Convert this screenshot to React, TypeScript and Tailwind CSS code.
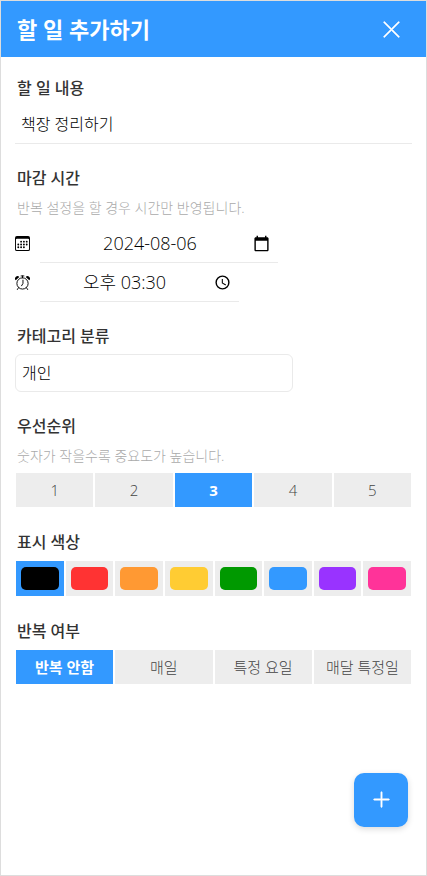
import { useState } from "react";
import { clsx } from "clsx";
import { BsCalendar3, BsPlusLg, BsXLg } from "react-icons/bs";

const priorities = ["1", "2", "3", "4", "5"];
const repeats = ["반복 안함", "매일", "특정 요일", "매달 특정일"];
const colors = [
    { name: "검정", className: "bg-black" },
    { name: "빨강", className: "bg-[#ff3333]" },
    { name: "주황", className: "bg-[#ff9933]" },
    { name: "노랑", className: "bg-[#ffcc33]" },
    { name: "초록", className: "bg-[#009900]" },
    { name: "파랑", className: "bg-[#3399ff]" },
    { name: "보라", className: "bg-[#9933ff]" },
    { name: "분홍", className: "bg-[#ff3399]" },
];

const labelStyle = "block pl-0.5 text-base leading-5 font-medium text-[#333]";

const AlarmIcon = () => (
    <svg width="15" height="15" viewBox="0 0 16 16" fill="none" stroke="currentColor">
        <circle cx="8" cy="9" r="6" strokeWidth="1" />
        <path d="M8.500 5.500V9L7 11.500M8 1v2M6.500 1h3M3.800 13.500l-1.300 2M12.200 13.500l1.300 2" strokeWidth="1" strokeLinecap="round" />
        <path d="M.8 5.600A2.500 2.500 0 0 1 4.600 2.100zM15.200 5.600a2.500 2.500 0 0 0-3.800-3.500z" fill="currentColor" stroke="none" />
    </svg>
);

const Hint = ({ children }: { children: string }) => (
    <p className="mt-2 mb-1 pl-0.5 text-sm leading-6 font-light text-[#aaa]">{children}</p>
);

type OptionsProps = {
    label: string;
    options: string[];
    value: string;
    onChange: (value: string) => void;
};

const Options = ({ label, options, value, onChange }: OptionsProps) => (
    <div role="group" aria-label={label} className="flex gap-0.5 px-px py-px">
        {options.map((option) => (
            <button
                key={option}
                type="button"
                aria-pressed={option === value}
                onClick={() => onChange(option)}
                className={clsx(
                    "h-[34px] flex-1 basis-0 text-[15px] whitespace-nowrap",
                    option === value ? "bg-[#3399ff] font-bold text-white" : "bg-[#ededed] font-light text-[#444]",
                )}
            >
                {option}
            </button>
        ))}
    </div>
);

export default function App() {
    const [content, setContent] = useState("책장 정리하기");
    const [date, setDate] = useState("2024-08-06");
    const [time, setTime] = useState("오후 03:30");
    const [priority, setPriority] = useState("3");
    const [color, setColor] = useState("검정");
    const [repeat, setRepeat] = useState("반복 안함");

    return (
        <div className="min-h-screen border border-[#ddd] bg-white font-['Open_Sans','Noto_Sans_CJK_KR',sans-serif]">
            <header className="flex h-14 items-center justify-between bg-[#3399ff] pr-6 pl-4 text-white">
                <h1 className="text-[22px] font-bold">할 일 추가하기</h1>
                <button type="button" aria-label="닫기">
                    <BsXLg size={21} stroke="currentColor" strokeWidth={0.4} />
                </button>
            </header>

            <form className="flex flex-col gap-6 px-3.5 pt-[21px] pb-24">
                <div>
                    <label htmlFor="content" className={labelStyle}>
                        할 일 내용
                    </label>
                    <input
                        id="content"
                        type="text"
                        value={content}
                        onChange={(e) => setContent(e.target.value)}
                        className="mt-2 h-[38px] w-full border-b border-[#eaeaea] px-1.5 pb-1 text-base font-light text-black outline-none"
                    />
                </div>

                <div>
                    <h2 className={labelStyle}>마감 시간</h2>
                    <Hint>반복 설정을 할 경우 시간만 반영됩니다.</Hint>
                    <div className="flex items-center gap-2.5">
                        <label htmlFor="date" aria-label="날짜">
                            <BsCalendar3 size={15} />
                        </label>
                        <div className="flex h-[39px] w-[238px] border-b border-[#eaeaea]">
                            <input
                                id="date"
                                type="text"
                                value={date}
                                onChange={(e) => setDate(e.target.value)}
                                className="min-w-0 flex-1 pl-4 text-center text-lg font-light text-black outline-none"
                            />
                            <button type="button" aria-label="날짜 선택" className="flex w-[34px] items-center justify-center">
                                <svg width="17" height="17" viewBox="0 0 24 24">
                                    <path d="M20 3h-1V1h-2v2H7V1H5v2H4c-1.100 0-2 .9-2 2v16c0 1.100.9 2 2 2h16c1.100 0 2-.9 2-2V5c0-1.100-.9-2-2-2zm0 18H4V8h16v13z" />
                                </svg>
                            </button>
                        </div>
                    </div>
                    <div className="flex items-center gap-2.5">
                        <label htmlFor="time" aria-label="시간">
                            <AlarmIcon />
                        </label>
                        <div className="flex h-[39px] w-[199px] border-b border-[#eaeaea]">
                            <input
                                id="time"
                                type="text"
                                value={time}
                                onChange={(e) => setTime(e.target.value)}
                                className="min-w-0 flex-1 pl-1 text-center text-lg font-light text-black outline-none"
                            />
                            <button type="button" aria-label="시간 선택" className="flex w-[34px] items-center justify-center">
                                <svg width="17" height="17" viewBox="0 0 24 24">
                                    <path d="M12 2a10 10 0 1 0 0 20 10 10 0 0 0 0-20zm0 18a8 8 0 1 1 0-16 8 8 0 0 1 0 16zM12.500 7H11v6l5.250 3.150.75-1.230-4.500-2.670z" />
                                </svg>
                            </button>
                        </div>
                    </div>
                </div>

                <div>
                    <label htmlFor="category" className={labelStyle}>
                        카테고리 분류
                    </label>
                    <select
                        id="category"
                        className="mt-2 block h-[38px] w-[278px] appearance-none rounded-md border border-[#eaeaea] bg-white px-1.5 text-base font-light text-black"
                    >
                        <option>개인</option>
                    </select>
                </div>

                <div>
                    <h2 className={labelStyle}>우선순위</h2>
                    <Hint>숫자가 작을수록 중요도가 높습니다.</Hint>
                    <Options label="우선순위" options={priorities} value={priority} onChange={setPriority} />
                </div>

                <div>
                    <h2 className={clsx(labelStyle, "mb-2")}>표시 색상</h2>
                    <div role="group" aria-label="표시 색상" className="flex gap-0.5 px-px py-px">
                        {colors.map(({ name, className }) => (
                            <button
                                key={name}
                                type="button"
                                aria-label={name}
                                aria-pressed={name === color}
                                onClick={() => setColor(name)}
                                className={clsx(
                                    "flex h-[35px] flex-1 px-[5px] py-1.5",
                                    name === color ? "bg-[#3399ff]" : "bg-[#ededed]",
                                )}
                            >
                                <span className={clsx("h-full w-full rounded-[5px]", className)} />
                            </button>
                        ))}
                    </div>
                </div>

                <div>
                    <h2 className={clsx(labelStyle, "mb-2")}>반복 여부</h2>
                    <Options label="반복 여부" options={repeats} value={repeat} onChange={setRepeat} />
                </div>
            </form>

            <button
                type="button"
                aria-label="추가"
                className="fixed right-[19px] bottom-[49px] flex size-[54px] items-center justify-center rounded-[10px] bg-[#3399ff] pb-0.5 text-white shadow-[0_2px_6px_rgba(0,0,0,0.15)]"
            >
                <BsPlusLg size={21} stroke="currentColor" strokeWidth={0.4} />
            </button>
        </div>
    );
}
